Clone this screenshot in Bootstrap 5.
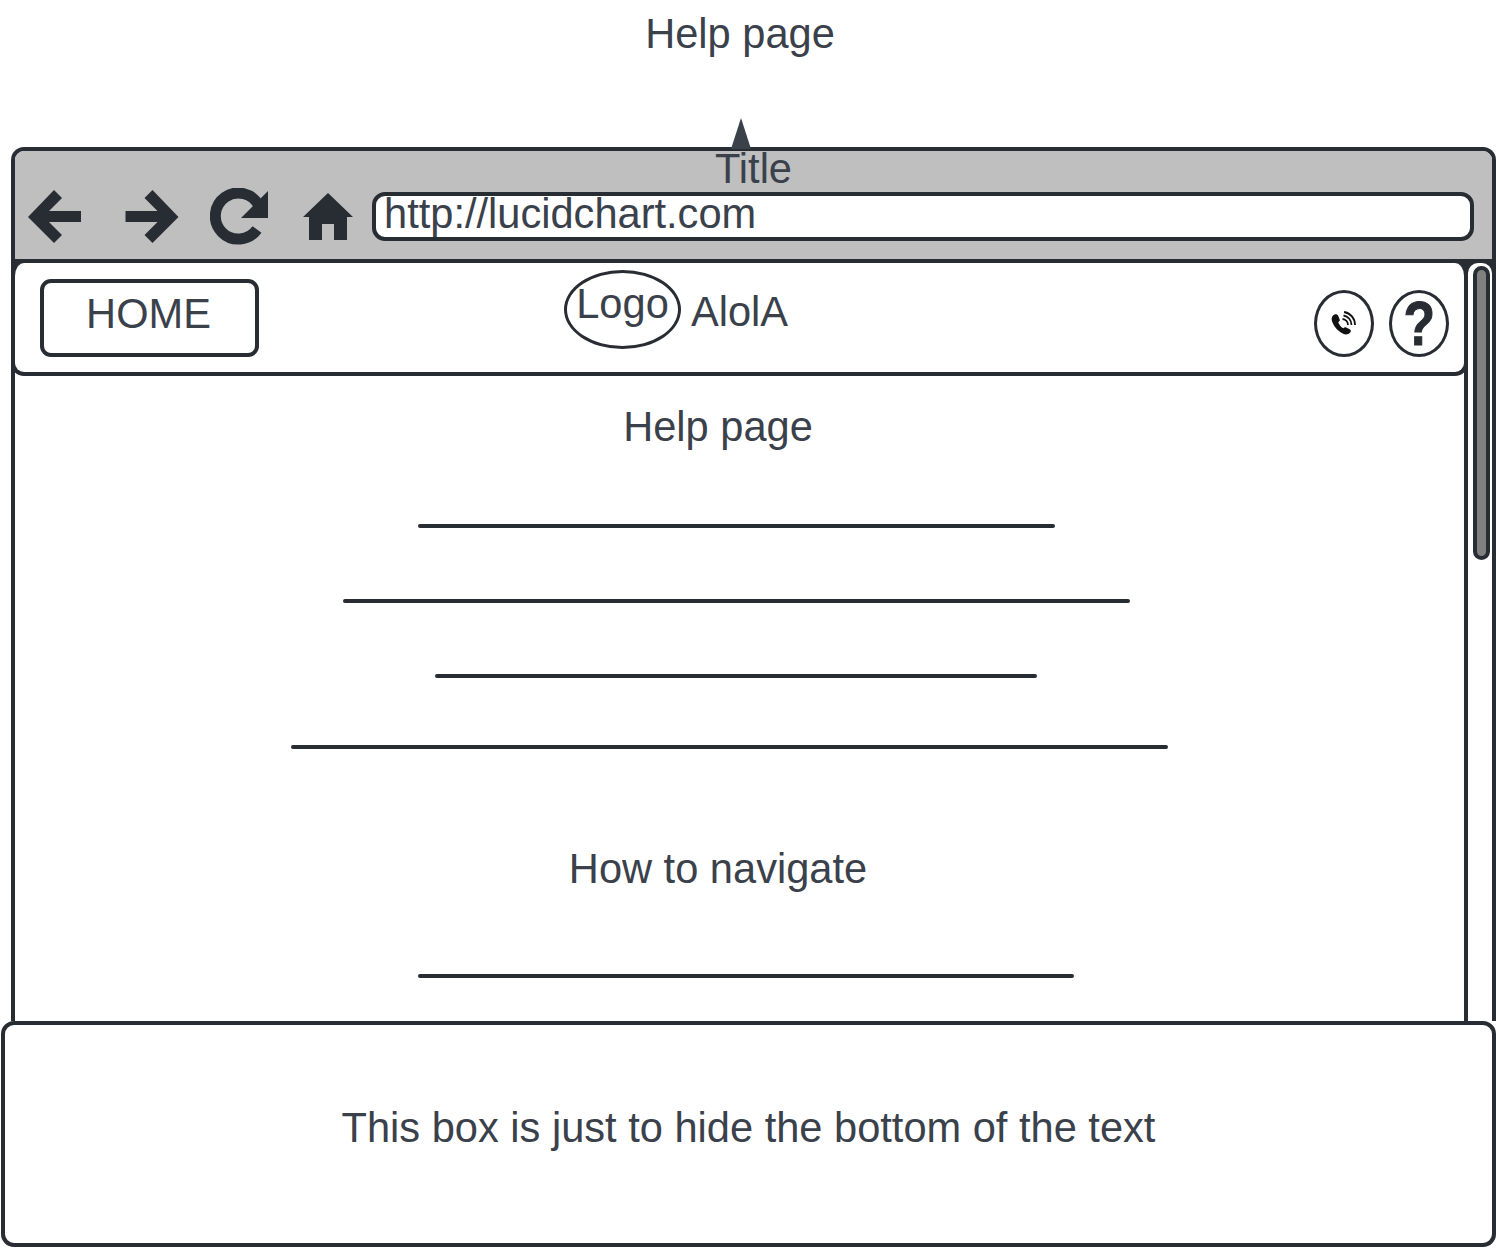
<!DOCTYPE html>
<html lang="en">

<head>
    <meta charset="UTF-8">
    <meta name="viewport" content="width=device-width, initial-scale=1.0">
    <title>Help page wireframe</title>
    <link href="https://cdn.jsdelivr.net/npm/bootstrap@5.3.2/dist/css/bootstrap.min.css" rel="stylesheet">
    <style>
        body {
            font-family: "Liberation Sans", Arial, sans-serif;
            font-size: 41.6px;
            line-height: 1;
            color: #3a414b;
            background: #fff;
            height: 1249px;
            overflow: hidden;
        }

        .wire-top {
            height: 147px;
            padding: 13px 0 0 0;
            text-align: center;
            margin-left: -16px;
        }

        .wire-window {
            position: relative;
            width: 1485px;
            height: 874px;
            margin-left: 11px;
            border: 4px solid #282c33;
            border-bottom: 0;
            border-radius: 13px 13px 0 0;
        }

        .wire-arrow {
            position: absolute;
            left: 715px;
            top: -33px;
        }

        .wire-chrome {
            height: 112px;
            background: #bfbfbf;
            border-radius: 9px 9px 0 0;
            border-bottom: 4px solid #282c33;
        }

        .wire-tabtitle {
            height: 37px;
            text-align: center;
            line-height: 36px;
        }

        .wire-tools {
            padding-left: 13px;
        }

        .wire-url {
            flex: 0 0 1102px;
            height: 49px;
            margin-left: 19px;
            padding-left: 8px;
            line-height: 36px;
            background: #fff;
            border: 4px solid #282c33;
            border-radius: 13px;
        }

        .wire-tool-back { margin-right: 44px; }
        .wire-tool-next { margin-right: 31px; }
        .wire-tool-load { margin-right: 35px; }

        .wire-main {
            height: 758px;
        }

        .wire-panel {
            width: 1453px;
            border-right: 4px solid #282c33;
            background: linear-gradient(#282c33 12px, #fff 12px);
        }

        .wire-scroll {
            width: 24px;
            background: linear-gradient(#282c33 12px, #fff 12px);
        }

        .wire-scroll-fill {
            height: 100%;
            padding: 3px 0 0 5px;
            background: #fff;
            border-radius: 10px 10px 0 0;
        }

        .wire-header {
            height: 113px;
            margin-left: -4px;
            margin-right: -4px;
            background: #fff;
            border: 4px solid #282c33;
            border-top-width: 0;
            border-radius: 13px;
            padding: 16px 15px 0 25px;
        }

        .wire-home {
            width: 219px;
            height: 78px;
            padding-right: 2px;
            border: 4px solid #282c33;
            border-radius: 11px;
            text-align: center;
            line-height: 62px;
            color: #3a414b;
            background: #fff;
        }

        .wire-logo {
            width: 117px;
            height: 79px;
            margin: -9px 0 0 305px;
            border: 3px solid #282c33;
            border-radius: 50%;
            text-align: center;
            line-height: 62px;
        }

        .wire-brand {
            margin: 12px 0 0 10px;
        }

        .wire-round {
            width: 60px;
            height: 67px;
            border: 3px solid #282c33;
            border-radius: 50%;
            margin-top: 11px;
        }

        .wire-round-help {
            margin-left: 15px;
            font-size: 63px;
            font-weight: 700;
            color: #282c33;
        }

        .wire-qmark {
            display: block;
            transform: scaleX(.82);
            -webkit-text-stroke: 1px #282c33;
        }

        .wire-thumb {
            width: 17px;
            height: 294px;
            background: #808080;
            border: 4px solid #282c33;
            border-radius: 9px;
        }

        .wire-heading {
            width: 1406px;
            height: 42px;
            line-height: 42px;
            text-align: center;
        }

        .wire-rule {
            height: 4px;
            background: #282c33;
            border-radius: 2px;
        }

        .wire-rule-a { width: 637px; margin: 76px 0 0 403px; }
        .wire-rule-b { width: 787px; margin: 71px 0 0 328px; }
        .wire-rule-c { width: 602px; margin: 71px 0 0 420px; }
        .wire-rule-d { width: 877px; margin: 67px 0 0 276px; }
        .wire-rule-e { width: 656px; margin: 0 0 0 403px; }

        .wire-heading-first { margin-top: 30px; }
        .wire-heading-second { margin-top: 99px; margin-bottom: 84px; }

        .wire-note {
            width: 1495px;
            height: 226px;
            margin-left: 1px;
            background: #fff;
            border: 4px solid #282c33;
            border-radius: 13px;
            padding-bottom: 12px;
        }
    </style>
</head>

<body>
    <div class="wire-top">Help page</div>

    <!-- Browser window -->
    <div class="wire-window">
        <svg class="wire-arrow" width="22" height="31" viewBox="0 0 22 31">
            <polygon points="11,0 21,31 1,31" fill="#3a414b"></polygon>
        </svg>

        <div class="wire-chrome">
            <div class="wire-tabtitle">Title</div>
            <div class="wire-tools d-flex align-items-center">
                <svg class="wire-tool-back flex-shrink-0" width="53" height="53" viewBox="0 0 53 53">
                    <polygon fill="#282c33" points="0,27 26,0 34,8 21,21 53,21 53,32 21,32 34,45 26,53"></polygon>
                </svg>
                <svg class="wire-tool-next flex-shrink-0" width="54" height="53" viewBox="0 0 53 53">
                    <polygon fill="#282c33" points="53,27 27,0 19,8 32,21 0,21 0,32 32,32 19,45 27,53"></polygon>
                </svg>
                <svg class="wire-tool-load flex-shrink-0" width="58" height="57" viewBox="0 0 58 57">
                    <path d="M47 41.500A23 23 0 1 1 49 18" fill="none" stroke="#282c33" stroke-width="11"></path>
                    <polygon fill="#282c33" points="58,3 58,30 31,30"></polygon>
                </svg>
                <svg class="flex-shrink-0" width="50" height="47" viewBox="0 0 50 47">
                    <path fill="#282c33" d="M25 0L50 24H44V47H31V31H19V47H6V24H0Z"></path>
                </svg>
                <div class="wire-url">http://lucidchart.com</div>
            </div>
        </div>

        <div class="wire-main d-flex">
            <div class="wire-panel">
                <div class="wire-header d-flex">
                    <div class="wire-home">HOME</div>
                    <div class="wire-logo">Logo</div>
                    <div class="wire-brand">AlolA</div>
                    <div class="wire-round ms-auto d-flex align-items-center justify-content-center">
                        <svg width="28" height="30" viewBox="0 0 28 30">
                            <path fill="#111" d="M3 6.500C5 4.500 7.500 5 8.300 7l1.400 3.400c.4 1-.2 1.900-1.500 2.800 1 2.600 2.700 4.700 5 6.100 1-1 2-1.400 3-.9l3.400 1.900c1.600.9 1.700 2.400.4 3.500-2 2-4.700 2.200-7.200.8C8 22.300 3.700 17.300 2 12.300 1.300 10 1.700 8 3 6.500z"></path>
                            <path fill="none" stroke="#111" stroke-width="1.800" d="M12.500 10a6 6 0 0 1 5.500 6M13.500 6.500a9.500 9.500 0 0 1 8 9.500M14 3a13 13 0 0 1 11 13"></path>
                        </svg>
                    </div>
                    <div class="wire-round wire-round-help d-flex align-items-center justify-content-center"><span class="wire-qmark">?</span></div>
                </div>

                <div class="wire-heading wire-heading-first">Help page</div>
                <div class="wire-rule wire-rule-a"></div>
                <div class="wire-rule wire-rule-b"></div>
                <div class="wire-rule wire-rule-c"></div>
                <div class="wire-rule wire-rule-d"></div>
                <div class="wire-heading wire-heading-second">How to navigate</div>
                <div class="wire-rule wire-rule-e"></div>
            </div>
            <div class="wire-scroll">
                <div class="wire-scroll-fill">
                    <div class="wire-thumb"></div>
                </div>
            </div>
        </div>
    </div>

    <!-- Box hiding the bottom of the text -->
    <div class="wire-note d-flex align-items-center justify-content-center">This box is just to hide the bottom of the text</div>

    <script src="https://cdn.jsdelivr.net/npm/bootstrap@5.3.2/dist/js/bootstrap.bundle.min.js"></script>
</body>

</html>
